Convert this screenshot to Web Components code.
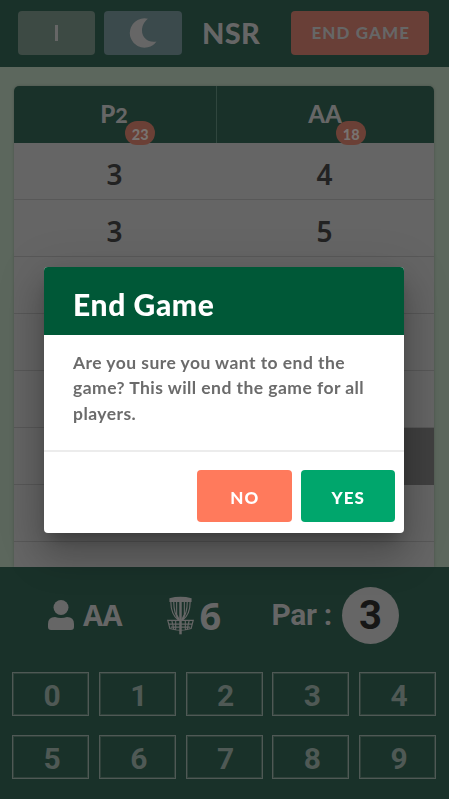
<!DOCTYPE html>
<html lang="en"><head><meta charset="utf-8"><title>Disc golf score card</title>
<style>
html,body{margin:0;height:100%;overflow:hidden}
body{font-family:Lato,"Open Sans",sans-serif;background:#5c675d}
</style></head><body>
<score-app></score-app>
<script>
function define(name, html, setup){
  const t=document.createElement('template'); t.innerHTML=html;
  customElements.define(name, class extends HTMLElement{
    constructor(){super();this.attachShadow({mode:'open'}).append(t.content.cloneNode(true));}
    connectedCallback(){if(setup)setup(this,this.shadowRoot);}
  });
}
define('app-button',`<style>
:host{display:flex;align-items:center;justify-content:center;box-sizing:border-box;border-radius:4px;height:43.5px;background:var(--bg);color:var(--fg,#666);font-weight:900;font-size:17px;letter-spacing:1.100px}
</style><slot></slot>`);
define('top-bar',`<style>
:host{display:flex;box-sizing:border-box;height:67px;padding:11px 19px 0 18px;background:#193129;color:#666;align-items:flex-start}
.a{--bg:#3d4a44;width:77px;margin-right:9px}.b{--bg:#3b4a4c;width:78px}
i{display:block;width:2.500px;height:16px;background:#666}
h1{font-size:29px;line-height:44px;margin:0 0 0 20px;font-weight:900;width:88.500px;letter-spacing:.3px}
.e{--bg:#693f37;width:138.500px;padding:0 0 1px 2px;box-sizing:border-box}
</style>
<app-button class="a"><i></i></app-button>
<app-button class="b"><svg width="28" height="30" viewBox="0 0 28 30"><path fill="#666" d="M19 .7A14.7 14.7 0 1 0 27.5 23.5C19.5 25 13 20 13 12.5C13 7.5 15.5 3.2 19 .7Z"/></svg></app-button>
<h1>NSR</h1><app-button class="e">END GAME</app-button>`);
define('player-head',`<style>
:host{display:flex;align-items:center;justify-content:center;height:57px;box-sizing:border-box;color:#666;font-weight:900;font-size:24px}
:host([split]){border-right:1px solid #30463e}
span{position:relative;top:-1px;left:-.5px}
::slotted(small){font-size:21.500px;letter-spacing:1px}
b{position:absolute;left:25px;top:22px;width:30px;height:24px;border-radius:12px;background:#6b4036;color:#787370;font-size:14.500px;line-height:27px;text-align:center;font-weight:900;z-index:1}
:host([wide]) b{left:28px}
</style><span><slot></slot><b></b></span>`,(h,r)=>r.querySelector('b').textContent=h.getAttribute('score'));
define('score-cell',`<style>
:host{display:flex;align-items:center;justify-content:center;height:57px;box-sizing:border-box;border-bottom:1px solid #585858;padding:5px 2px 0 0;font:600 28px "Noto Sans",sans-serif;color:#222}
:host([current]){background:#404040;border-color:#404040}
</style><slot></slot>`);
define('score-table',`<style>
:host{display:grid;grid-template-columns:203px 217px;width:420px;height:481px;margin:19px 0 0 14px;overflow:hidden;border-radius:5px 5px 0 0;background:linear-gradient(#193129 57px,#656565 57px);box-shadow:0 0 3px #0003;align-content:start}
</style><slot></slot>`);
define('turn-status',`<style>
:host{display:flex;height:57px;align-items:center;font:700 30px Roboto,sans-serif;color:#666;padding:0 50px 0 48px}
.num{font:700 38px "Noto Sans",sans-serif;margin:-2px 0 0 6px}
.name{font:700 29px "Noto Sans",sans-serif;margin:-2px 0 0 9px;width:83.500px;letter-spacing:-.5px}
.par{margin:-2px 10px 0 auto;letter-spacing:-.3px}
.c{width:57px;height:57px;border-radius:50%;background:#666;color:#161616;font-size:40px;line-height:57px;text-align:center;flex:none}
svg{margin-top:-1px;flex:none}
</style>
<svg width="26" height="30" viewBox="0 0 26 30" fill="#666"><circle cx="13" cy="7.5" r="7.5"/><path d="M0 24Q0 17 7 17Q13 19 19 17Q26 17 26 24V27Q26 30 23 30H3Q0 30 0 27Z"/></svg>
<span class="name">AA</span>
<svg width="27" height="39" viewBox="0 0 28 40" fill="none" stroke="#666"><path fill="#666" stroke="none" d="M2.5 2Q14-1 25.500 2V6H2.500Z"/><path d="M14 5V39.500" stroke-width="2.600"/><path stroke-width="1.200" d="M4 6Q4 19 12 25M7 6Q7 18 12.500 25M10 6V19L13 25M18 6V19L15 25M21 6Q21 18 15.500 25M24 6Q24 19 16 25"/><path stroke-width="1.200" d="M.8 25H27.200L25 33.500Q14 37 3 33.500ZM1.500 29H26.500M5 25L7 34M9 25V35M19 25V35M23 25L21 34M4 32H24"/></svg>
<span class="num">6</span><span class="par">Par :</span><span class="c">3</span>`);
define('num-pad',`<style>
:host{display:grid;grid-template-columns:repeat(5,77px);justify-content:space-between;row-gap:19px;margin:28px 13px 0 12px}
div{height:44px;box-sizing:border-box;border:1.500px solid #4f5955;outline:1px solid #4f595566;outline-offset:-2px;color:#4f5955;font:700 30px/45px Roboto,sans-serif;text-align:center;padding-left:3px}
</style>`,(h,r)=>{for(let n=0;n<10;n++){const d=document.createElement('div');d.textContent=n;r.append(d);}});
define('control-panel',`<style>:host{display:block;box-sizing:border-box;height:232px;padding-top:20px;background:#193129;position:relative}</style><slot></slot>`);
define('confirm-dialog',`<style>
:host{position:fixed;inset:0 1px 0 0;display:flex;align-items:center;justify-content:center;z-index:5}
section{width:360px;height:266px;background:#fff;border-radius:4px;overflow:hidden;box-shadow:0 10px 15px -6px #0004,0 22px 38px 3px #0003,0 8px 46px 8px #00000018}
header{height:68px;background:#005837;color:#fff;font-size:30px;letter-spacing:.6px;font-weight:900;line-height:74px;padding-left:29px;box-sizing:border-box}
p{margin:0;height:117px;box-sizing:border-box;padding:15px 8px 0 29px;border-bottom:2px solid #ececec;font-size:17.500px;letter-spacing:.45px;line-height:25.500px;font-weight:700;color:#6b6b6b;white-space:pre-line}
footer{display:flex;justify-content:flex-end;gap:9px;padding:18.500px 9px 0}
app-button{height:52px;width:94.500px;--fg:#fff;padding:2px 0 0 1px}
</style><section><header><slot name="title"></slot></header><p><slot></slot></p><footer><app-button style="--bg:#ff7a5c">NO</app-button><app-button style="--bg:#00a66c">YES</app-button></footer></section>`);
define('score-app',`<style>:host{display:block;height:799px}</style>
<top-bar></top-bar><score-table><player-head split score="23">P<small>2</small></player-head><player-head wide score="18">AA</player-head>
<score-cell>3</score-cell><score-cell>4</score-cell><score-cell>3</score-cell><score-cell>5</score-cell>
<score-cell></score-cell><score-cell></score-cell><score-cell></score-cell><score-cell></score-cell><score-cell></score-cell><score-cell></score-cell><score-cell></score-cell><score-cell current></score-cell><score-cell></score-cell><score-cell></score-cell><score-cell></score-cell><score-cell></score-cell></score-table>
<control-panel><turn-status></turn-status><num-pad></num-pad></control-panel>
<confirm-dialog><span slot="title">End Game</span>Are you sure you want to end the<br>game? This will end the game for all<br>players.</confirm-dialog>`);
</script></body></html>
